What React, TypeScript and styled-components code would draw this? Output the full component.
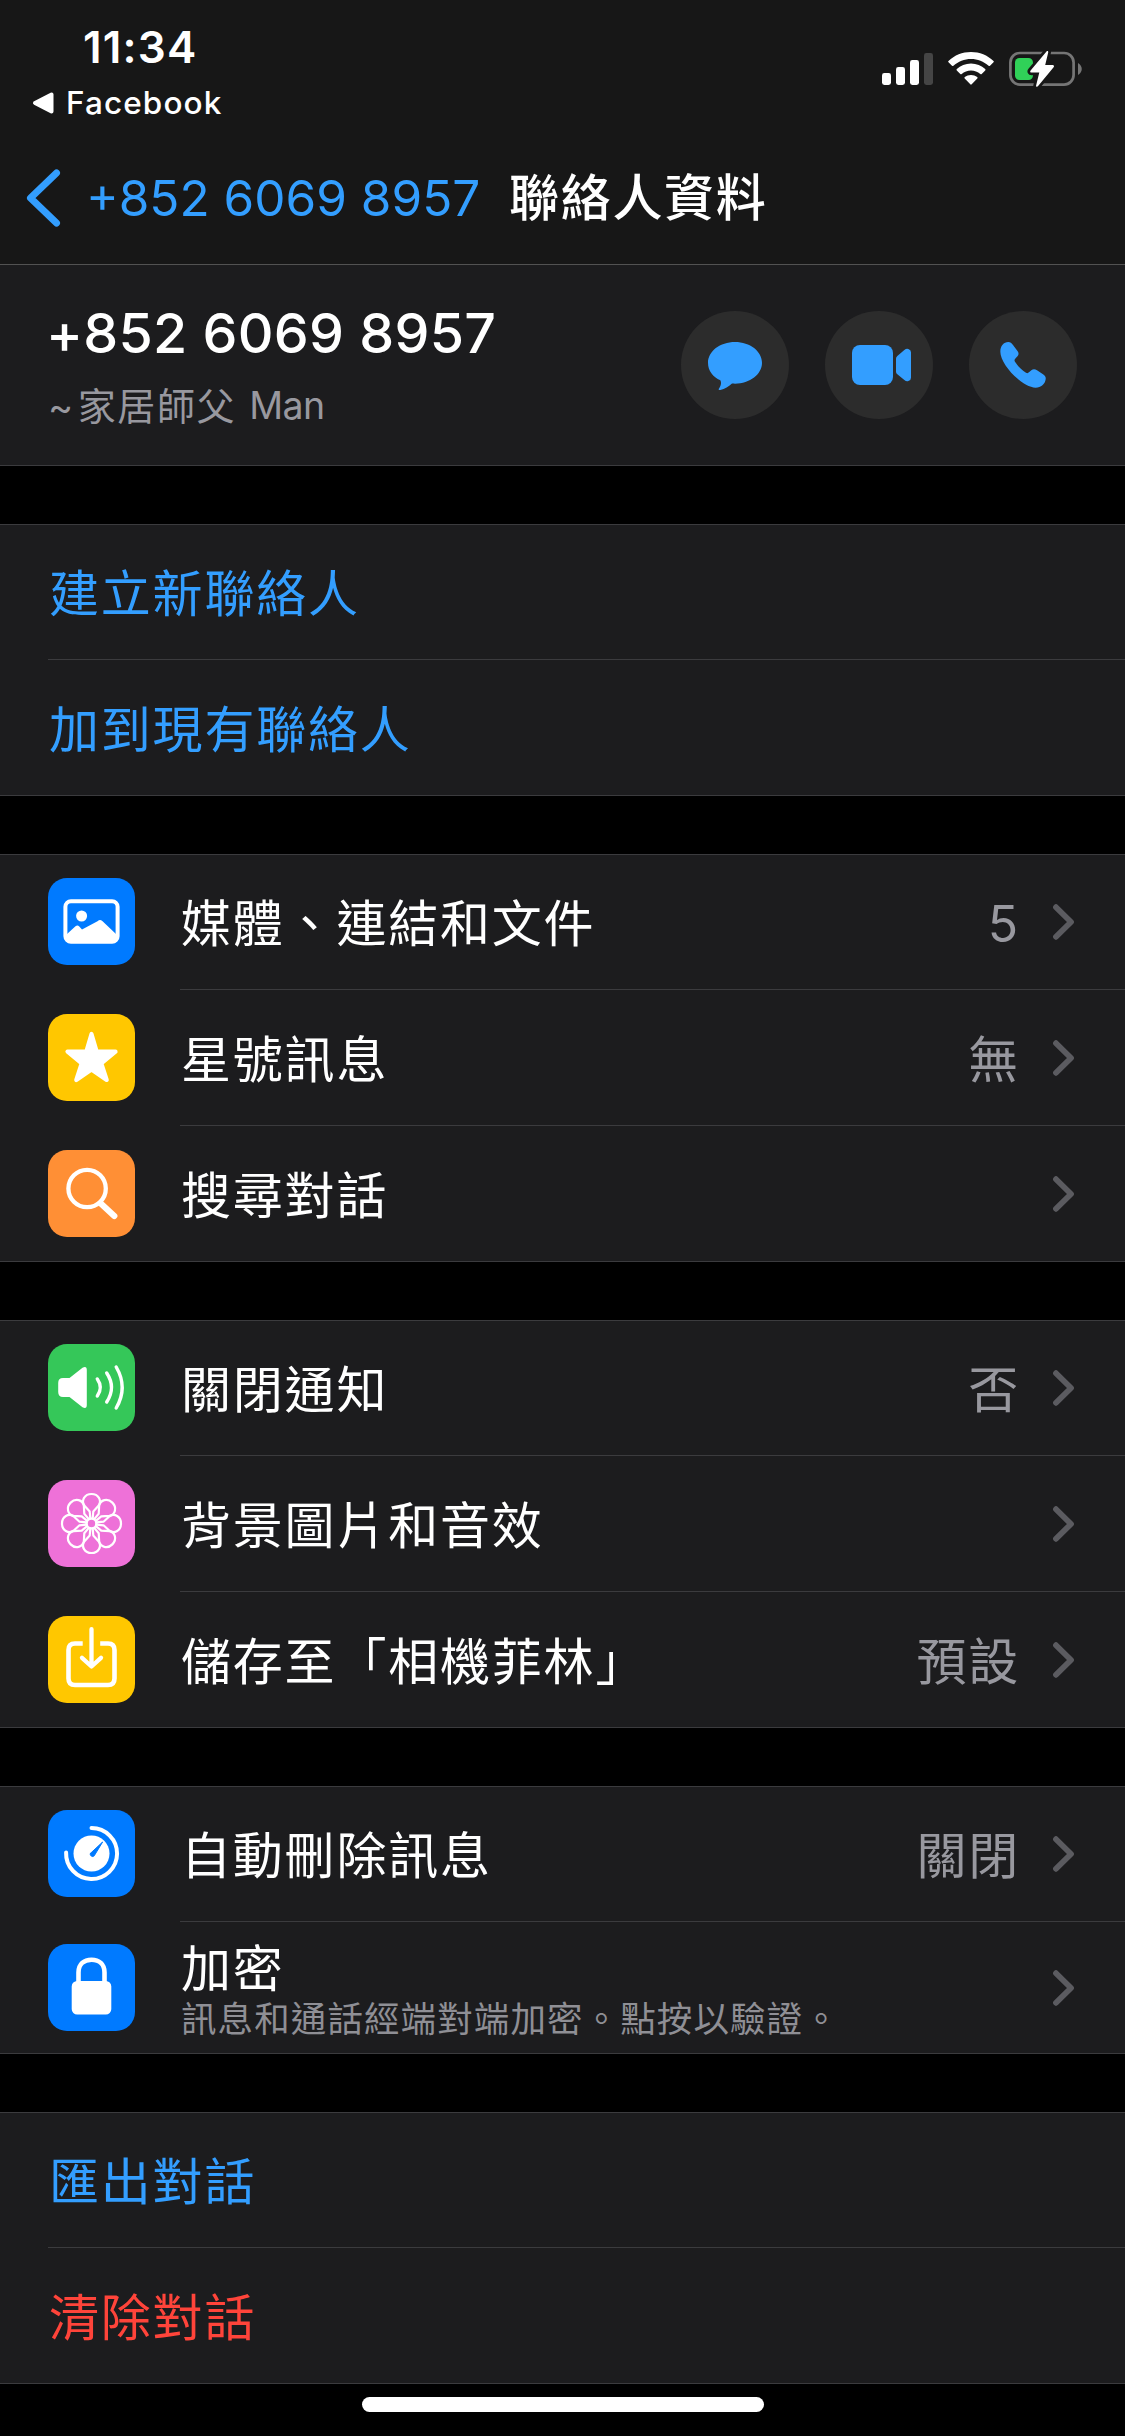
import React from "react";
import styled, { createGlobalStyle } from "styled-components";

const color = {
  nav: "#171717",
  panel: "#1c1c1e",
  line: "#3b3b3e",
  navLine: "#525252",
  link: "#339eff",
  danger: "#ff443a",
  muted: "#98989f",
  caption: "#8f8f95",
  chevron: "#5b5b60",
};

const Global = createGlobalStyle`
  html, body { margin: 0; padding: 0; background: #000; }
  * { box-sizing: border-box; }
  body {
    font-family: Inter, "Noto Sans CJK TC", sans-serif;
    color: #fff;
    -webkit-font-smoothing: antialiased;
  }
  svg { display: block; flex: none; }
`;

const Screen = styled.div`
  width: 1125px;
  height: 2436px;
  background: #000;
  display: flex;
  flex-direction: column;
  overflow: hidden;
`;

const Header = styled.header`
  height: 265px;
  background: ${color.nav};
  border-bottom: 1px solid ${color.navLine};
`;

const StatusBar = styled.div`
  height: 132px;
  display: flex;
  justify-content: space-between;
`;

const StatusLeft = styled.div`
  padding: 20px 0 0 32px;
`;

const Clock = styled.div`
  padding-left: 51px;
  font-size: 44px;
  font-weight: 600;
  line-height: 54px;
  letter-spacing: 1.2px;
`;

const BackToApp = styled.div`
  margin-top: 9px;
  display: flex;
  align-items: center;
  gap: 11px;
  font-size: 31.5px;
  font-weight: 450;
  line-height: 40px;
  letter-spacing: 1.1px;
`;

const StatusIcons = styled.div`
  display: flex;
  padding: 50px 42px 0 0;
`;

const NavBar = styled.nav`
  height: 132px;
  display: flex;
  align-items: center;
  padding-left: 24px;
`;

const BackLabel = styled.span`
  margin-left: 23px;
  width: 423px;
  color: ${color.link};
  font-size: 49.5px;
  line-height: 60px;
  letter-spacing: 0;
  white-space: nowrap;
`;

const NavTitle = styled.h1`
  margin: 0;
  font-size: 50px;
  font-weight: 500;
  line-height: 60px;
  letter-spacing: 1.7px;
`;

const ContactCard = styled.section`
  height: 201px;
  flex: none;
  background: ${color.panel};
  border-bottom: 1px solid ${color.line};
  display: flex;
  justify-content: space-between;
  align-items: center;
  padding: 0 48px;
`;

const ContactName = styled.div`
  margin-left: -2px;
  font-size: 55.5px;
  font-weight: 500;
  line-height: 66px;
  letter-spacing: 0.25px;
`;

const ContactAlias = styled.div`
  margin-top: 13px;
  margin-bottom: -3px;
  color: ${color.muted};
  font-size: 38px;
  line-height: 54px;
  letter-spacing: 1.6px;
  display: flex;
`;

const AliasName = styled.span`
  margin-left: 3px;
`;

const AliasLatin = styled.span`
  margin-left: 13px;
  font-size: 37.5px;
  letter-spacing: -0.6px;
`;

const Actions = styled.div`
  display: flex;
  gap: 36px;
`;

const ActionButton = styled.button`
  width: 108px;
  height: 108px;
  padding: 0;
  border: 0;
  border-radius: 50%;
  background: #2c2c2c;
  color: ${color.link};
`;

const Group = styled.section`
  margin-top: 58px;
  flex: none;
  background: ${color.panel};
  border-top: 1px solid ${color.line};
  border-bottom: 1px solid ${color.line};
`;

const RowBox = styled.div<{ $height: number }>`
  height: ${(p) => p.$height}px;
  padding-left: 48px;
  display: flex;
  align-items: center;
`;

const RowBody = styled.div<{ $divided: boolean }>`
  flex: 1;
  align-self: stretch;
  display: flex;
  align-items: center;
  padding-right: 51px;
  border-bottom: ${(p) => (p.$divided ? `1px solid ${color.line}` : "0")};
`;

const Tile = styled.div<{ $bg: string; $divided: boolean }>`
  width: 87px;
  height: 87px;
  margin-right: 45px;
  margin-bottom: ${(p) => (p.$divided ? 2 : 0)}px;
  border-radius: 19px;
  background: ${(p) => p.$bg};
  color: #fff;
`;

const Labels = styled.div<{ $stacked: boolean }>`
  flex: 1;
  padding: ${(p) => (p.$stacked ? 6 : 0)}px 0 0 1px;
`;

const Label = styled.div<{ $tone?: string }>`
  padding-top: 4px;
  color: ${(p) => p.$tone ?? "#fff"};
  font-size: 50px;
  line-height: 60px;
  letter-spacing: 1.8px;
  white-space: nowrap;
`;

const Note = styled.div`
  margin-top: -5px;
  color: ${color.caption};
  font-size: 35.5px;
  line-height: 52px;
  letter-spacing: 1.1px;
  white-space: nowrap;
`;

const Value = styled.div`
  padding-top: 4px;
  margin-right: 33px;
  color: ${color.muted};
  font-size: 50px;
  line-height: 60px;
  letter-spacing: 1.8px;
`;

const HomeIndicator = styled.div`
  width: 402px;
  height: 15px;
  margin: 13px auto 0;
  border-radius: 8px;
  background: #fff;
`;

const IconGap = styled.div`
  width: 15px;
`;

const SignalIcon = () => (
  <svg width="51" height="36" viewBox="0 0 51 36" fill="#fff">
    <rect x="0" y="23" width="9" height="12" rx="2.4" />
    <rect x="14" y="17" width="9" height="18" rx="2.4" />
    <rect x="28" y="10" width="9" height="25" rx="2.4" />
    <rect x="42" y="3" width="9" height="32" rx="2.4" fill="#454545" />
  </svg>
);

const WifiIcon = () => (
  <svg width="46" height="36" viewBox="0 0 46 36" fill="#fff">
    <path d="M23 2C31.6 2 39.6 5.300 45.500 10.900Q46.200 11.600 45.500 12.300L42 15.800Q41.300 16.400 40.600 15.800C35.800 11.400 29.600 9 23 9S10.200 11.400 5.400 15.800Q4.700 16.400 4 15.800L.5 12.300Q-.2 11.600 .5 10.900C6.400 5.300 14.400 2 23 2Z" />
    <path d="M23 13.500C28.500 13.500 33.500 15.600 37.200 19.100Q37.900 19.800 37.200 20.500L33.700 24Q33 24.600 32.300 24C29.800 21.800 26.500 20.500 23 20.500S16.200 21.800 13.700 24Q13 24.600 12.300 24L8.800 20.500Q8.100 19.800 8.800 19.100C12.500 15.600 17.500 13.500 23 13.500Z" />
    <path d="M23 25C25.400 25 27.500 25.800 29.200 27.100Q30 27.800 29.300 28.500L23.700 34.300Q23 35 22.300 34.300L16.700 28.500Q16 27.800 16.800 27.100C18.500 25.800 20.600 25 23 25Z" />
  </svg>
);

const BatteryIcon = () => (
  <svg width="74" height="40" viewBox="0 0 74 40">
    <rect x="1.400" y="3" width="63.200" height="31.600" rx="9.500" fill="none" stroke="#757575" strokeWidth="2.700" />
    <path d="M69 13C74 16 74 22 69 25Z" fill="#757575" />
    <rect x="6" y="8" width="18" height="22" rx="4.500" fill="#30d158" />
    <path
      d="M37.500 1.500C38.400.5 39.500 1.200 39.200 2.400L36.200 15H43.500C45 15 45.500 16.200 44.600 17.300L28.900 36.300C28 37.300 26.800 36.600 27.100 35.400L30.300 22.500H22.600C21.200 22.500 20.800 21.400 21.600 20.400Z"
      fill="#fff"
      stroke={color.nav}
      strokeWidth="5.500"
      paintOrder="stroke"
    />
  </svg>
);

const ReturnTriangle = () => (
  <svg width="23" height="24" viewBox="0 0 23 24">
    <path d="M19.500 3.500V20.500L3 12Z" fill="#fff" stroke="#fff" strokeWidth="4" strokeLinejoin="round" />
  </svg>
);

const BackChevron = () => (
  <svg width="39" height="64" viewBox="0 0 39 64" fill="none" stroke={color.link} strokeWidth="7" strokeLinecap="round" strokeLinejoin="round">
    <path d="M32.500 7L6.500 32L32.500 57" />
  </svg>
);

const Chevron = () => (
  <svg width="21" height="38" viewBox="0 0 21 38" fill="none" stroke={color.chevron} strokeWidth="5.800" strokeLinecap="round" strokeLinejoin="round">
    <path d="M3 4.200L18 19L3 33.800" />
  </svg>
);

const ActionGlyph = ({ children }: { children: React.ReactNode }) => (
  <svg width="108" height="108" viewBox="0 0 324 324" fill="currentColor">
    {children}
  </svg>
);

const MessageGlyph = () => (
  <ActionGlyph>
    <path d="M162 93C207 93 243 121 243 155.500S207 218 162 218C158 218 155 217 152 218C143 226 132 234 118 237C112 238 112 235 115 231C120 223 122 215 118 208C96 198 81 180 81 155.500C81 121 117 93 162 93Z" />
  </ActionGlyph>
);

const VideoGlyph = () => (
  <ActionGlyph>
    <rect x="81" y="102" width="123" height="120" rx="24" />
    <path d="M213 143Q213 138 217 135L238 117Q244 112 250 114Q258 116 258 124V200Q258 208 250 210Q244 212 238 207L217 190Q213 187 213 182Z" />
  </ActionGlyph>
);

const PhoneGlyph = () => (
  <ActionGlyph>
    <path d="M94 122C94 105 104 93 118 93C124 93 128 96 132 102L146 121C150 127 149 131 146 135L138 144C136 147 136 149 138 152C147 166 160 178 171 185C174 187 177 187 180 184L187 178C192 174 198 174 204 178L222 190C229 195 231 199 230 205C228 220 216 230 200 230C160 230 94 160 94 122Z" />
  </ActionGlyph>
);

const TileGlyph = ({ children }: { children: React.ReactNode }) => (
  <svg width="87" height="87" viewBox="0 0 87 87" fill="none" stroke="currentColor" strokeLinecap="round" strokeLinejoin="round">
    {children}
  </svg>
);

const MediaGlyph = () => (
  <TileGlyph>
    <rect x="17.400" y="23.300" width="52.200" height="40.400" rx="5.500" strokeWidth="4" />
    <circle cx="33.600" cy="38" r="5.500" fill="currentColor" stroke="none" />
    <path d="M19 56L27.500 48.300Q29.500 46.500 31.300 48.500L34 51.500L49.500 43.300L49.800 43Q52 41 54.300 43L68 56V62H19Z" fill="currentColor" stroke="none" />
  </TileGlyph>
);

const StarGlyph = () => (
  <TileGlyph>
    <path d="M43.500 20L48.600 37.300L67.500 37.700L53.300 49.300L58.700 66L43.500 55.500L28.300 66L33.700 49.300L19.500 37.700L38.400 37.300Z" fill="currentColor" strokeWidth="4.200" />
  </TileGlyph>
);

const SearchGlyph = () => (
  <TileGlyph>
    <circle cx="39.100" cy="38.500" r="18.700" strokeWidth="4.300" />
    <path d="M52.800 53.500L66.300 66" strokeWidth="6.200" />
  </TileGlyph>
);

const SpeakerGlyph = () => (
  <TileGlyph>
    <path d="M15 34H21.500L34.500 23.700Q38.800 21.500 38.800 26V61Q38.800 65.500 34.500 63.300L21.500 53H15Q10.200 53 10.200 48V39Q10.200 34 15 34Z" fill="currentColor" stroke="none" />
    <g strokeWidth="3.400">
      <path d="M49.300 35Q55.300 43.500 49.300 52" />
      <path d="M58.700 29Q68.300 43.500 58.700 58" />
      <path d="M68.200 23Q80.200 43.500 68.200 64" />
    </g>
  </TileGlyph>
);

const FlowerGlyph = () => (
  <TileGlyph>
    <g strokeWidth="2.200">
      <circle cx="43.500" cy="43.500" r="4.800" />
      {[0, 45, 90, 135, 180, 225, 270, 315].map((angle) => (
        <path
          key={angle}
          transform={`rotate(${angle} 43.500 43.500)`}
          d="M42.300 38.500L41.700 31.500L36.300 25.500C33 20.500 36.500 14 43.500 14S54 20.500 50.700 25.500L45.300 31.500L44.700 38.500"
        />
      ))}
    </g>
  </TileGlyph>
);

const SaveGlyph = () => (
  <TileGlyph>
    <path d="M34.700 27.500H27Q20.500 27.500 20.500 34V62.500Q20.500 69 27 69H60Q66.500 69 66.500 62.500V34Q66.500 27.500 60 27.500H52.200" strokeWidth="4.600" strokeLinecap="butt" />
    <path d="M43.500 13.200V49.500M34 41.800L43.500 50.500L53 41.800" strokeWidth="4.300" />
  </TileGlyph>
);

const TimerGlyph = () => (
  <TileGlyph>
    <circle cx="43.500" cy="43.500" r="18" fill="currentColor" stroke="none" />
    <path d="M43.500 18A25.500 25.500 0 1 1 18.100 42.500" strokeWidth="4" />
    <path d="M42.600 43.200L54.600 32L46.200 45.800Q44.800 47.200 43.300 46.100Q41.500 44.800 42.600 43.200Z" fill="#007aff" stroke="#007aff" strokeWidth="1" />
  </TileGlyph>
);

const LockGlyph = () => (
  <TileGlyph>
    <path d="M30.500 39V28.500C30.500 20 36 15.700 43.500 15.700S56.500 20 56.500 28.500V39" strokeWidth="4.600" />
    <rect x="23.700" y="37" width="39.600" height="33.500" rx="5.500" fill="currentColor" stroke="none" />
  </TileGlyph>
);

type RowProps = {
  label: string;
  tone?: string;
  icon?: React.ReactNode;
  tileColor?: string;
  value?: string;
  note?: string;
  height?: number;
  last?: boolean;
};

const Row = ({ label, tone, icon, tileColor, value, note, height = 135, last = false }: RowProps) => (
  <RowBox $height={height}>
    {icon && <Tile $bg={tileColor ?? "#007aff"} $divided={!last}>{icon}</Tile>}
    <RowBody $divided={!last}>
      <Labels $stacked={Boolean(note)}>
        <Label $tone={tone}>{label}</Label>
        {note && <Note>{note}</Note>}
      </Labels>
      {value && <Value>{value}</Value>}
      {icon && <Chevron />}
    </RowBody>
  </RowBox>
);

export default function App() {
  return (
    <>
      <Global />
      <Screen lang="zh-Hant">
        <Header>
          <StatusBar>
            <StatusLeft>
              <Clock>11:34</Clock>
              <BackToApp>
                <ReturnTriangle />
                Facebook
              </BackToApp>
            </StatusLeft>
            <StatusIcons>
              <SignalIcon />
              <IconGap />
              <WifiIcon />
              <IconGap />
              <BatteryIcon />
            </StatusIcons>
          </StatusBar>
          <NavBar>
            <BackChevron />
            <BackLabel>+852 6069 8957</BackLabel>
            <NavTitle>聯絡人資料</NavTitle>
          </NavBar>
        </Header>

        <ContactCard>
          <div>
            <ContactName>+852 6069 8957</ContactName>
            <ContactAlias>
              <span>~</span>
              <AliasName>家居師父</AliasName>
              <AliasLatin>Man</AliasLatin>
            </ContactAlias>
          </div>
          <Actions>
            <ActionButton><MessageGlyph /></ActionButton>
            <ActionButton><VideoGlyph /></ActionButton>
            <ActionButton><PhoneGlyph /></ActionButton>
          </Actions>
        </ContactCard>

        <Group>
          <Row label="建立新聯絡人" tone={color.link} />
          <Row label="加到現有聯絡人" tone={color.link} last />
        </Group>

        <Group>
          <Row label="媒體、連結和文件" icon={<MediaGlyph />} tileColor="#007aff" value="5" />
          <Row label="星號訊息" icon={<StarGlyph />} tileColor="#ffc700" value="無" height={136} />
          <Row label="搜尋對話" icon={<SearchGlyph />} tileColor="#ff8f35" last />
        </Group>

        <Group>
          <Row label="關閉通知" icon={<SpeakerGlyph />} tileColor="#35c759" value="否" />
          <Row label="背景圖片和音效" icon={<FlowerGlyph />} tileColor="#ee71d8" height={136} />
          <Row label="儲存至「相機菲林」" icon={<SaveGlyph />} tileColor="#ffc700" value="預設" last />
        </Group>

        <Group>
          <Row label="自動刪除訊息" icon={<TimerGlyph />} tileColor="#007aff" value="關閉" />
          <Row label="加密" note="訊息和通話經端對端加密。點按以驗證。" icon={<LockGlyph />} tileColor="#007aff" height={131} last />
        </Group>

        <Group>
          <Row label="匯出對話" tone={color.link} />
          <Row label="清除對話" tone={color.danger} last />
        </Group>

        <HomeIndicator />
      </Screen>
    </>
  );
}
